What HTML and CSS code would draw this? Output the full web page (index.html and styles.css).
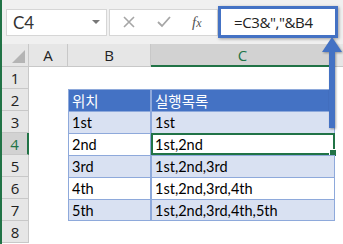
FILE: index.html
```html
<!DOCTYPE html>
<html lang="ko">
<head>
  <meta charset="UTF-8">
  <title>C3&amp;","&amp;B4</title>
  <link rel="stylesheet" href="styles.css">
</head>
<body>
  <div class="sheet">
    <!-- Barra de fórmulas -->
    <div class="formula-bar">
      <div class="name-box">
        <span>C4</span>
        <span class="drop"></span>
      </div>
      <div class="buttons">
        <svg class="btn-icon" width="14" height="14" viewBox="0 0 14 14"><path d="M2 2 L12 12 M12 2 L2 12" stroke="#a6a6a6" stroke-width="1.6" fill="none"/></svg>
        <svg class="btn-icon" width="16" height="14" viewBox="0 0 16 14"><path d="M2 7 L6 11 L14 2" stroke="#a6a6a6" stroke-width="1.8" fill="none"/></svg>
        <span class="fx">f<i>x</i></span>
      </div>
      <div class="formula">=C3&amp;","&amp;B4</div>
    </div>

    <!-- Planilha -->
    <div class="grid">
      <div class="corner"><span class="tri"></span></div>
      <div class="col-head">A</div>
      <div class="col-head">B</div>
      <div class="col-head sel">C</div>
      <div class="col-head rest"></div>

      <div class="row-head">1</div>
      <div class="cell"></div><div class="cell"></div><div class="cell"></div><div class="cell"></div>

      <div class="row-head">2</div>
      <div class="cell"></div>
      <div class="cell th">위치</div>
      <div class="cell th">실행목록</div>
      <div class="cell"></div>

      <div class="row-head">3</div>
      <div class="cell"></div>
      <div class="cell td band">1st</div>
      <div class="cell td band">1st</div>
      <div class="cell"></div>

      <div class="row-head sel">4</div>
      <div class="cell"></div>
      <div class="cell td">2nd</div>
      <div class="cell td active">1st,2nd</div>
      <div class="cell"></div>

      <div class="row-head">5</div>
      <div class="cell"></div>
      <div class="cell td band">3rd</div>
      <div class="cell td band">1st,2nd,3rd</div>
      <div class="cell"></div>

      <div class="row-head">6</div>
      <div class="cell"></div>
      <div class="cell td">4th</div>
      <div class="cell td">1st,2nd,3rd,4th</div>
      <div class="cell"></div>

      <div class="row-head">7</div>
      <div class="cell"></div>
      <div class="cell td band last">5th</div>
      <div class="cell td band last">1st,2nd,3rd,4th,5th</div>
      <div class="cell"></div>

      <div class="row-head">8</div>
      <div class="cell"></div><div class="cell"></div><div class="cell"></div><div class="cell"></div>
    </div>

    <!-- Seta de destaque -->
    <svg class="arrow" width="30" height="100" viewBox="0 0 30 100">
      <path d="M14 3 L24 18 L17 18 L17 94 L11 94 L11 18 L4 18 Z" fill="#4472c4"/>
    </svg>
  </div>
</body>
</html>
```

FILE: styles.css
```css
body {
  margin: 0;
  padding: 0;
  background: #ffffff;
}
.sheet {
  position: relative;
  width: 343px;
  height: 244px;
  overflow: hidden;
  border-left: 2px solid #217346;
  box-sizing: border-box;
  font-family: "Open Sans", "Noto Sans CJK KR", sans-serif;
}
.formula-bar {
  display: flex;
  align-items: center;
  height: 44px;
  background: #f0f0f0;
  padding-left: 4px;
  box-sizing: border-box;
}
.name-box {
  display: flex;
  align-items: center;
  justify-content: space-between;
  width: 101px;
  height: 27px;
  background: #ffffff;
  border: 1px solid #d6d6d6;
  box-sizing: border-box;
  padding: 0 6px 0 6px;
  font-family: Lato, sans-serif;
  font-size: 17px;
  color: #333333;
}
.name-box .drop {
  border-left: 4px solid transparent;
  border-right: 4px solid transparent;
  border-top: 4px solid #777777;
}
.buttons {
  display: flex;
  align-items: center;
  gap: 20px;
  width: 109px;
  height: 27px;
  margin-left: 2px;
  background: #ffffff;
  border: 1px solid #d6d6d6;
  box-sizing: border-box;
  padding-left: 12px;
}
.fx {
  font-family: "Liberation Serif", serif;
  font-style: italic;
  font-size: 15px;
  color: #555555;
}
.fx i {
  font-size: 12px;
}
.formula {
  width: 120px;
  height: 32px;
  background: #ffffff;
  border: 3px solid #4472c4;
  box-sizing: border-box;
  padding-left: 13px;
  font-family: "Open Sans", sans-serif;
  font-size: 15px;
  letter-spacing: -0.4px;
  line-height: 26px;
  color: #222222;
  box-shadow: 1px 1px 3px rgba(0, 0, 0, 0.35);
}
.grid {
  display: grid;
  grid-template-columns: 27px 39px 83px 184px 1fr;
  grid-template-rows: 23px repeat(8, 22px);
  font-size: 15px;
}
.corner {
  position: relative;
  background: #e6e6e6;
  border-right: 1px solid #c8c8c8;
  border-bottom: 1px solid #c8c8c8;
}
.corner .tri {
  position: absolute;
  right: 3px;
  bottom: 3px;
  border-left: 13px solid transparent;
  border-bottom: 13px solid #b4b4b4;
}
.col-head {
  display: flex;
  align-items: center;
  justify-content: center;
  background: #e6e6e6;
  border-right: 1px solid #c8c8c8;
  border-bottom: 1px solid #c8c8c8;
  color: #222222;
}
.col-head.sel {
  background: #d2d2d2;
  color: #217346;
  border-bottom: 2px solid #217346;
}
.col-head.rest {
  border-right: none;
}
.row-head {
  display: flex;
  align-items: center;
  justify-content: center;
  background: #e6e6e6;
  border-right: 1px solid #c8c8c8;
  border-bottom: 1px solid #c8c8c8;
  color: #222222;
}
.row-head.sel {
  background: #d2d2d2;
  color: #217346;
  border-right: 2px solid #217346;
}
.cell {
  position: relative;
  display: flex;
  align-items: center;
  padding-left: 3px;
  font-family: Lato, "Noto Sans CJK KR", sans-serif;
  font-size: 14.5px;
  color: #000000;
  white-space: nowrap;
}
.th {
  background: #4472c4;
  color: #ffffff;
  border-left: 1px solid #8ea9db;
  border-right: 1px solid #8ea9db;
  border-top: 1px solid #8ea9db;
  font-family: "Noto Sans CJK KR", sans-serif;
}
.td {
  border-left: 1px solid #8ea9db;
  border-right: 1px solid #8ea9db;
  border-top: 1px solid #8ea9db;
}
.td.band {
  background: #d9e1f2;
}
.td.last {
  border-bottom: 1px solid #8ea9db;
}
.td.active {
  border: 2px solid #217346;
  padding-left: 2px;
}
.td.active::after {
  content: "";
  position: absolute;
  right: -4px;
  bottom: -4px;
  width: 6px;
  height: 6px;
  background: #217346;
  border: 1px solid #ffffff;
}
.arrow {
  position: absolute;
  left: 316px;
  top: 34px;
  filter: drop-shadow(1px 1px 1px rgba(0, 0, 0, 0.35));
}
```
